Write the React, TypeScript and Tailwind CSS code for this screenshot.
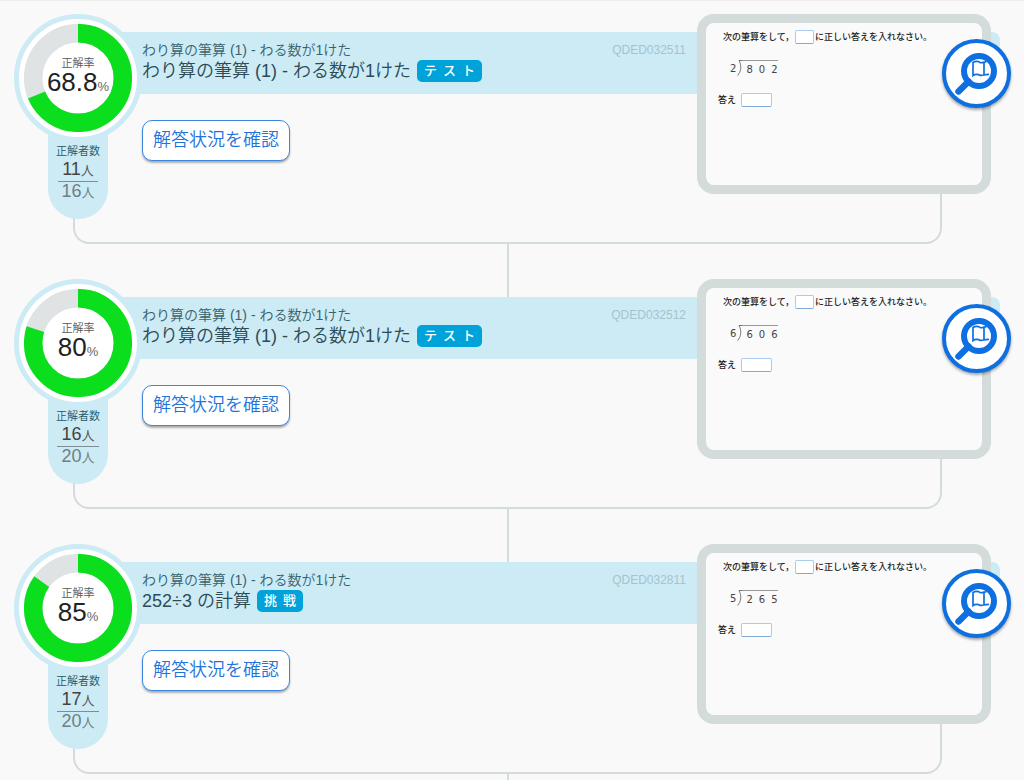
interface Item {
  code: string;
  unit: string;
  title: string;
  tag: string;
  rate: number;
  correct: number;
  total: number;
  divisor: string;
  dividend: string;
}

const UNIT = "わり算の筆算 (1) - わる数が1けた";

const ITEMS: Item[] = [
  { code: "QDED032511", unit: UNIT, title: UNIT, tag: "テスト", rate: 68.8, correct: 11, total: 16, divisor: "2", dividend: "802" },
  { code: "QDED032512", unit: UNIT, title: UNIT, tag: "テスト", rate: 80, correct: 16, total: 20, divisor: "6", dividend: "606" },
  { code: "QDED032811", unit: UNIT, title: "252÷3 の計算", tag: "挑戦", rate: 85, correct: 17, total: 20, divisor: "5", dividend: "265" },
];

// ─── Correct-rate dial ────────────────────────────────────────

function RateDial({ rate }: { rate: number }) {
  return (
    <div className="grid size-32 place-items-center rounded-full border-5 border-[#cdebf5] bg-white">
      <svg viewBox="0 0 108 108" className="size-[108px] [grid-area:1/1]" aria-hidden="true">
        <circle cx="54" cy="54" r="44.8" fill="none" stroke="#dfe3e4" strokeWidth="18.5" />
        <circle
          cx="54"
          cy="54"
          r="44.8"
          fill="none"
          stroke="#0bdf1d"
          strokeWidth="18.5"
          pathLength="100"
          strokeDasharray={`${rate} 100`}
          transform="rotate(-90 54 54)"
        />
      </svg>
      <div className="flex flex-col items-center [grid-area:1/1]">
        <span className="text-[11px] leading-3 text-[#555]">正解率</span>
        <span className="text-[26px] leading-[26px] whitespace-nowrap text-[#222]">
          {rate}
          <span className="text-[13px] text-[#666]">%</span>
        </span>
      </div>
    </div>
  );
}

// ─── Correct / total answers under the dial ───────────────────

function AnswerCount({ correct, total }: { correct: number; total: number }) {
  return (
    <div className="-mt-10 flex h-[117px] w-[60px] flex-col items-center rounded-b-full bg-[#cdebf5] pt-[41px]">
      <span className="text-[11px] leading-4 text-[#1f5563]">正解者数</span>
      <span className="border-b border-[#7d8f95] px-1 text-[18px] leading-5 text-[#444]">
        {correct}
        <span className="text-[13px] text-[#555]">人</span>
      </span>
      <span className="text-[18px] leading-[18px] text-[#6d7f85]">
        {total}
        <span className="text-[13px]">人</span>
      </span>
    </div>
  );
}

// ─── Question preview ─────────────────────────────────────────

function Blank({ label, className }: { label: string; className: string }) {
  return (
    <input
      readOnly
      aria-label={label}
      className={`h-[14px] rounded-[2px] border border-[#a9cbf0] border-b-[#7fa9d8] bg-white ${className}`}
    />
  );
}

function Board({ item }: { item: Item }) {
  return (
    <div className="relative h-[180px] w-[294px] shrink-0 rounded-[17px] border-9 border-[#d3dcda] bg-[#fafafa] text-[9px] font-medium text-[#222]">
      <p className="flex items-center pt-[7px] pl-[17px] leading-[14px] whitespace-nowrap">
        次の筆算をして，
        <Blank label="空欄" className="mx-px w-[19px]" />
        に正しい答えを入れなさい。
      </p>
      <div className="flex pt-4 pl-6 font-['DejaVu_Sans'] text-[10px] leading-[18px] text-[#444]">
        <span>{item.divisor}</span>
        <svg viewBox="0 0 6 18" className="h-[18px] w-[6px]" fill="none" stroke="#777" aria-hidden="true">
          <path d="M3 .5H6M3 .5C6 6 5 12 1.500 15.500" />
        </svg>
        <span className="flex gap-[6px] border-t border-[#999] pl-1">
          {[...item.dividend].map((digit, i) => (
            <span key={i}>{digit}</span>
          ))}
        </span>
      </div>
      <label className="flex items-center gap-[5px] pt-[14px] pl-3 leading-[14px]">
        答え
        <Blank label="答え" className="w-[31px]" />
      </label>

      <button
        type="button"
        aria-label="問題を拡大"
        className="absolute top-4 -right-[29px] size-[69px] rounded-full border-4 border-[#0e70e0] bg-white shadow-[0_2px_3px_rgba(0,0,0,0.35)]"
      >
        <svg viewBox="0 0 61 61" className="size-[61px]" fill="none" stroke="#0e70e0" aria-hidden="true">
          <circle cx="33" cy="28" r="15" strokeWidth="6" />
          <path d="M22.500 38.500L12.500 48.500" strokeWidth="6.500" strokeLinecap="round" />
          <path
            d="M27 19.500C29 18 32.500 18 34 19.500C36 20.500 37.500 18.500 40.500 19M38 19.300V31.500M27 19V32.500C29 31 32.500 31 34 32.300C37 33 38.500 31 43 31.300"
            strokeWidth="1.700"
          />
        </svg>
      </button>
    </div>
  );
}

// ─── One row ──────────────────────────────────────────────────

function QuestionRow({ item }: { item: Item }) {
  return (
    <li>
      <div className="isolate grid">
        {/* Bracket joining the dial and the board */}
        <div className="mr-[82px] ml-[73px] h-[230px] rounded-b-2xl border-x-2 border-b-2 border-[#d3dcda] [grid-area:1/1]" />
        {/* Title band */}
        <div className="mt-[18px] mr-6 ml-20 h-[62px] rounded-r-lg bg-[#cdebf5] [grid-area:1/1]" />

        <div className="z-10 flex items-start pr-[33px] pl-[14px] [grid-area:1/1]">
          <div className="flex w-32 shrink-0 flex-col items-center">
            <div className="z-10">
              <RateDial rate={item.rate} />
            </div>
            <AnswerCount correct={item.correct} total={item.total} />
          </div>

          <div className="flex min-w-0 flex-1 flex-col items-start pt-[26px]">
            <div className="flex w-full justify-between pr-[11px] leading-5">
              <span className="text-[14px] text-[#35636f]">{item.unit}</span>
              <span className="text-[12px] text-[#a6c3cc]">{item.code}</span>
            </div>
            <div className="flex items-center gap-[6px]">
              <h2 className="text-[18px] leading-[22px] text-[#2c4b57]">{item.title}</h2>
              <span className="flex h-[22px] items-center gap-[6px] rounded-[5px] bg-[#00a3d9] px-[7px] text-[13px] font-medium text-white">
                {[...item.tag].map((ch) => (
                  <span key={ch}>{ch}</span>
                ))}
              </span>
            </div>
            <button
              type="button"
              className="mt-[38px] h-[41px] rounded-[10px] border border-[#3b87de] bg-white px-[10px] pb-px text-[18px] text-[#1f74db] shadow-[0_2px_2px_rgba(0,0,0,0.3)]"
            >
              解答状況を確認
            </button>
          </div>

          <Board item={item} />
        </div>
      </div>
      {/* Stem down to the next band */}
      <div className="mr-[9px] -mb-[18px] flex h-[53px] justify-center">
        <div className="w-[2px] bg-[#d3dcda]" />
      </div>
    </li>
  );
}

export default function App() {
  return (
    <main
      lang="ja"
      className="h-screen overflow-hidden border-t border-[#eee] bg-[#f9f9f9] pt-[13px] font-['Liberation_Sans','Noto_Sans_CJK_JP',sans-serif] font-[350]"
    >
      <ul>
        {ITEMS.map((item) => (
          <QuestionRow key={item.code} item={item} />
        ))}
      </ul>
    </main>
  );
}
